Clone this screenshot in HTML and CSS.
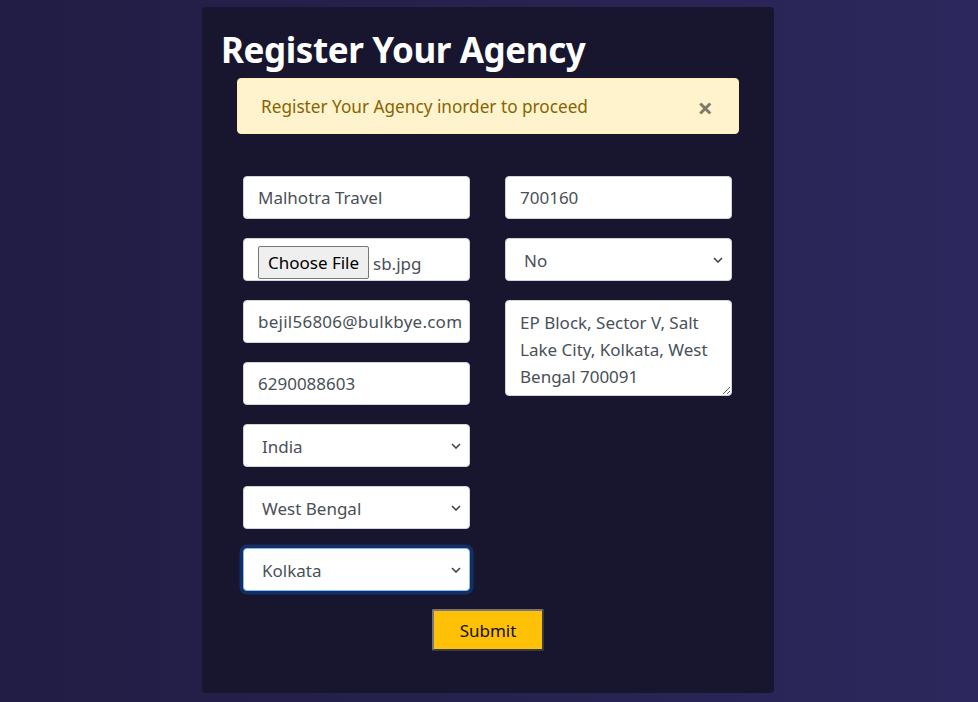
FILE: index.html
```html
<!DOCTYPE html>
<html lang="en">
<head>
<meta charset="utf-8">
<title>Register Your Agency</title>
<link rel="stylesheet" href="styles.css">
</head>
<body>
<div class="card">
  <h1 class="title">Register Your Agency</h1>
  <div class="alert">
    <span>Register Your Agency inorder to proceed</span>
    <button class="close" type="button" aria-label="Close">&times;</button>
  </div>
  <form class="form">
    <div class="col">
      <input class="control" type="text" value="Malhotra Travel">
      <div class="control file"><span class="file-btn">Choose File</span><span class="file-name">sb.jpg</span></div>
      <input class="control email" type="text" value="bejil56806@bulkbye.com">
      <input class="control" type="text" value="6290088603">
      <select class="control select"><option>India</option></select>
      <select class="control select"><option>West Bengal</option></select>
      <select class="control select focus"><option>Kolkata</option></select>
    </div>
    <div class="col">
      <input class="control" type="text" value="700160">
      <select class="control select"><option>No</option></select>
      <textarea class="control area">EP Block, Sector V, Salt Lake City, Kolkata, West Bengal 700091</textarea>
    </div>
  </form>
  <div class="actions">
    <button class="submit" type="button">Submit</button>
  </div>
</div>
</body>
</html>
```
FILE: styles.css
```css
* { box-sizing: border-box; }
html, body { margin: 0; height: 100%; }
body {
  background: linear-gradient(90deg, #211d44 0%, #25224f 50%, #2c285d 100%);
  font-family: "Noto Sans", "Open Sans", sans-serif;
  font-size: 17px;
  overflow: hidden;
}
.card {
  width: 572px;
  height: 686px;
  margin: 7px 0 0 202px;
  background: #18162f;
  border-radius: 4px;
  padding: 20px 0 0 0;
  display: flex;
  flex-direction: column;
  align-items: center;
}
.title {
  align-self: flex-start;
  margin: 0 0 0 19px;
  color: #fff;
  font-size: 35px;
  font-weight: 700;
  line-height: 46px;
  letter-spacing: -0.4px;
}
.alert {
  width: 502px;
  height: 56px;
  margin-top: 5px;
  background: #fff3cd;
  border: 1px solid #ffeeba;
  border-radius: 4px;
  color: #856404;
  display: flex;
  align-items: center;
  justify-content: space-between;
  padding: 1px 25px 0 23px;
  font-size: 17.2px;
}
.close {
  background: none;
  border: 0;
  padding: 0;
  font-family: "Noto Sans", sans-serif;
  font-size: 27px;
  font-weight: 700;
  color: #000;
  opacity: 0.5;
  line-height: 1;
  margin-top: 2px;
}
.form {
  margin: 42px 0 0 41px;
  align-self: flex-start;
  width: 489px;
  display: flex;
  justify-content: space-between;
}
.col {
  width: 227px;
  display: flex;
  flex-direction: column;
  gap: 19px;
}
.control {
  width: 227px;
  height: 43px;
  border: 1px solid #ced4da;
  border-radius: 4px;
  background: #fff;
  color: #495057;
  font-family: "Noto Sans", "Open Sans", sans-serif;
  font-size: 17px;
  padding: 0 14px;
  margin: 0;
  outline: none;
}
.email {
  padding-right: 2px;
  letter-spacing: 0.25px;
}
.file {
  display: flex;
  align-items: flex-end;
  padding: 0 0 1px 14px;
  gap: 4px;
}
.file-btn {
  background: #efefef;
  border: 1px solid #767676;
  border-radius: 2px;
  color: #000;
  height: 33px;
  width: 111px;
  display: flex;
  align-items: center;
  justify-content: center;
  font-size: 17px;
}
.file-name {
  color: #495057;
  line-height: 31px;
}
.select {
  appearance: none;
  -webkit-appearance: none;
  padding: 1px 30px 0 18px;
  background-image: url("data:image/svg+xml,%3Csvg xmlns='http://www.w3.org/2000/svg' width='10' height='6' viewBox='0 0 10 6'%3E%3Cpath d='M1 1l4 4 4-4' fill='none' stroke='%23444' stroke-width='1.6'/%3E%3C/svg%3E");
  background-repeat: no-repeat;
  background-position: right 8px center;
  background-size: 10px 6px;
}
.focus {
  border-color: #80bdff;
  box-shadow: 0 0 0 3.5px rgba(0, 123, 255, 0.25);
}
.area {
  height: 96px;
  padding: 8px 14px;
  line-height: 27px;
  resize: vertical;
  overflow: hidden;
}
.actions {
  margin-top: 18px;
  display: flex;
  justify-content: center;
}
.submit {
  width: 112px;
  height: 42px;
  background: #ffc107;
  border: 2px solid #767676;
  border-right-color: #3a3a3a;
  border-bottom-color: #3a3a3a;
  border-radius: 2px;
  color: #111;
  font-family: "Noto Sans", sans-serif;
  font-size: 17px;
  padding: 0;
}
```
